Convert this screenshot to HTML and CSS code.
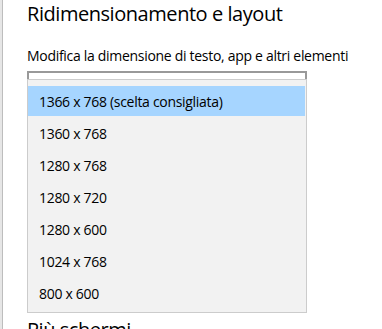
FILE: index.html
```html
<!DOCTYPE html>
<html lang="it">
<head>
<meta charset="utf-8">
<title>Ridimensionamento e layout</title>
<link rel="stylesheet" href="styles.css">
</head>
<body>
<div class="window">
  <div class="edge"></div>
  <main class="content">
    <h2 class="title">Ridimensionamento e layout</h2>
    <p class="label">Modifica la dimensione di testo, app e altri elementi</p>
    <div class="combo-wrap">
      <div class="combo"></div>
      <ul class="popup">
        <li class="item selected">1366 x 768 (scelta consigliata)</li>
        <li class="item">1360 x 768</li>
        <li class="item">1280 x 768</li>
        <li class="item">1280 x 720</li>
        <li class="item">1280 x 600</li>
        <li class="item">1024 x 768</li>
        <li class="item">800 x 600</li>
      </ul>
    </div>
    <h2 class="title next">Più schermi</h2>
  </main>
</div>
</body>
</html>
```

FILE: styles.css
```css
html, body {
  margin: 0;
  padding: 0;
  background: #ffffff;
}
body {
  font-family: "Open Sans", "Noto Sans", "Liberation Sans", sans-serif;
  color: #000000;
  width: 382px;
  height: 329px;
  overflow: hidden;
}
.window {
  display: flex;
  height: 329px;
  overflow: hidden;
}
.edge {
  width: 2px;
  flex: none;
  background: #e6e6e6;
  border-right: 1px solid #bdbdbd;
}
.content {
  flex: 1;
  padding-left: 24px;
}
.title {
  margin: 0;
  font-weight: 400;
  font-size: 20px;
  line-height: 28px;
  letter-spacing: -0.45px;
}
.label {
  margin: 18px 0 0;
  font-size: 14px;
  line-height: 20px;
  letter-spacing: -0.3px;
}
.combo-wrap {
  position: relative;
  margin-top: 5px;
  width: 280px;
  height: 245px;
}
.combo {
  height: 28px;
  border: 2px solid #999999;
  background: #ffffff;
}
.popup {
  position: absolute;
  left: 0;
  top: 8px;
  right: 0;
  margin: 0;
  padding: 5px 0 3px;
  list-style: none;
  background: #f2f2f2;
  border: 1px solid #cccccc;
  display: flex;
  flex-direction: column;
}
.item {
  height: 30px;
  margin: 1px 1px 1px 0;
  padding-left: 11px;
  display: flex;
  align-items: center;
  font-size: 14px;
  letter-spacing: -0.3px;
}
.item.selected {
  background: #a6d5ff;
}
.next {
  margin-top: 0;
}
```
